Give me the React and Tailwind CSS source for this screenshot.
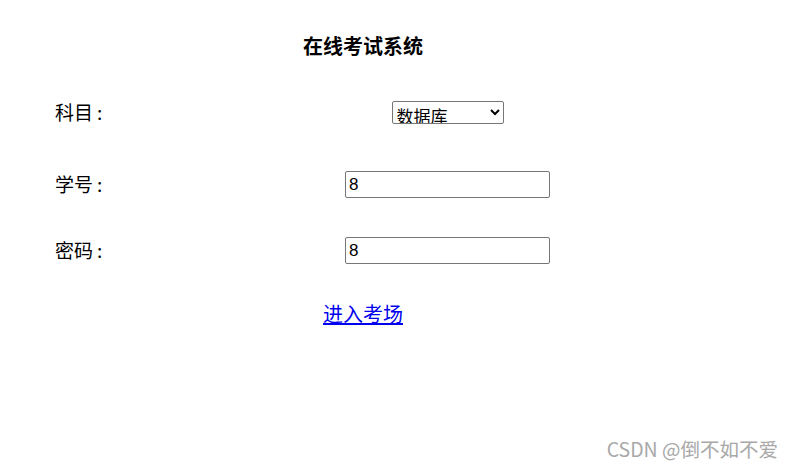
import React, { useState } from 'react';

const cjk = { fontFamily: '"Noto Sans CJK SC", "Noto Sans", sans-serif' };

const FieldRow = ({ label, children, className }) => (
  <div className={`flex items-center ${className}`}>
    <div className="w-[345px] pl-[55px] text-[19px] text-black">
      {label}
      <span className="ml-[4px]">:</span>
    </div>
    <div className="w-[205px] flex justify-center">{children}</div>
  </div>
);

const App = () => {
  const [subject, setSubject] = useState('数据库');
  const [sid, setSid] = useState('8');
  const [pwd, setPwd] = useState('8');

  return (
    <div className="relative w-[793px] h-[468px] bg-white overflow-hidden" style={cjk}>
      <div className="w-[726px] flex flex-col">
        {/* Title */}
        <div className="mt-[31px] h-[30px] flex items-center justify-center text-[20px] font-bold text-black">
          在线考试系统
        </div>

        {/* Form rows */}
        <FieldRow label="科目" className="mt-[35px] h-[32px]">
          <select
            value={subject}
            onChange={(e) => setSubject(e.target.value)}
            className="w-[112px] h-[23px] border border-[#767676] rounded-[2px] bg-white text-[17px] leading-none text-black pl-0"
          >
            <option>数据库</option>
            <option>操作系统</option>
            <option>计算机网络</option>
          </select>
        </FieldRow>

        <FieldRow label="学号" className="mt-[40px] h-[33px]">
          <input
            value={sid}
            onChange={(e) => setSid(e.target.value)}
            className="w-[205px] h-[27px] border border-[#767676] rounded-[2px] bg-white px-[3px] text-[17px] text-black"
            style={{ fontFamily: '"Liberation Sans", Arial, sans-serif' }}
          />
        </FieldRow>

        <FieldRow label="密码" className="mt-[33px] h-[33px]">
          <input
            value={pwd}
            onChange={(e) => setPwd(e.target.value)}
            className="w-[205px] h-[27px] border border-[#767676] rounded-[2px] bg-white px-[3px] text-[17px] text-black"
            style={{ fontFamily: '"Liberation Sans", Arial, sans-serif' }}
          />
        </FieldRow>

        {/* Enter link */}
        <div className="mt-[32px] h-[30px] flex items-center justify-center">
          <a href="#" className="text-[20px] text-[#0000ee] underline">进入考场</a>
        </div>
      </div>

      {/* Watermark */}
      <div className="absolute right-[15px] top-[434px] text-[19.5px] text-[#a8a8a8]">
        CSDN @倒不如不爱
      </div>
    </div>
  );
};

export default App;
